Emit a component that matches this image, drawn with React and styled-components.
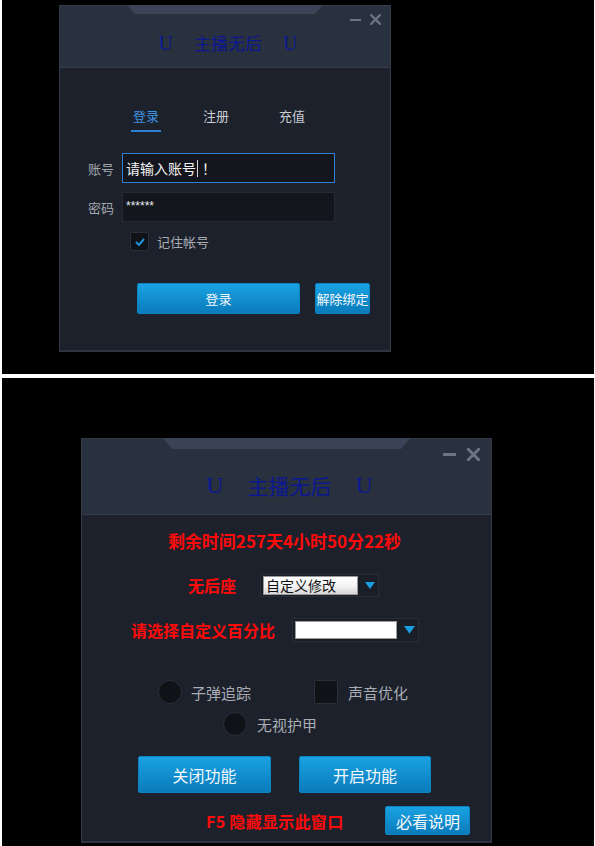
import React from "react";
import styled, { createGlobalStyle } from "styled-components";

const Global = createGlobalStyle`
  html, body { margin: 0; padding: 0; background: #ffffff; }
  body { font-family: "Noto Sans CJK SC", "Noto Sans", sans-serif; }
  * { box-sizing: border-box; }
`;

const Page = styled.div`
  width: 595px;
  display: flex;
  flex-direction: column;
  gap: 4px;
`;

const Stage = styled.div`
  background: #000;
  height: ${(p) => p.$h}px;
  padding-top: ${(p) => p.$top}px;
  padding-left: ${(p) => p.$left}px;
  margin: 0 1px 0 2px;
`;

const Panel = styled.div`
  position: relative;
  width: ${(p) => p.$w}px;
  height: ${(p) => p.$h}px;
  background: #1c212b;
  border: 1px solid #323a47;
  border-bottom: 2px solid #2e3542;
  display: flex;
  flex-direction: column;
`;

const Header = styled.div`
  height: ${(p) => p.$h}px;
  flex: none;
  background: #29313f;
  border-bottom: 1px solid #343d4b;
  display: flex;
  flex-direction: column;
  align-items: center;
`;

const Notch = styled.div`
  width: ${(p) => p.$w}px;
  height: ${(p) => p.$h}px;
  background: #3a4456;
  clip-path: polygon(0 0, 100% 0, calc(100% - ${(p) => p.$s}px) 100%, ${(p) => p.$s}px 100%);
  margin-top: -1px;
`;

const Title = styled.div`
  display: flex;
  align-items: center;
  gap: ${(p) => p.$gap}px;
  margin-top: ${(p) => p.$mt}px;
  font-size: ${(p) => p.$fs}px;
  line-height: ${(p) => p.$lh}px;
  color: #0b1890;
  padding-left: ${(p) => p.$pl || 0}px;
`;

const TitleU = styled.span`
  font-family: "Liberation Serif", serif;
  font-size: ${(p) => p.$fs}px;
`;

const TitleText = styled.span`
  font-family: "Noto Sans CJK SC", sans-serif;
  font-weight: 400;
`;

const Controls = styled.div`
  position: absolute;
  top: ${(p) => p.$top}px;
  right: ${(p) => p.$right}px;
  display: flex;
  align-items: center;
  gap: ${(p) => p.$gap}px;
`;

const Body = styled.div`
  flex: 1;
  display: flex;
  flex-direction: column;
`;

/* ---------- panel 1 ---------- */
const TabBar = styled.div`
  display: flex;
  padding-top: 38px;
  padding-left: 71px;
`;

const Tab = styled.div`
  width: ${(p) => p.$w}px;
  display: flex;
`;

const TabLabel = styled.span`
  font-size: 13px;
  line-height: 20px;
  padding: 0 2px 4px;
  color: ${(p) => (p.$active ? "#3f93e4" : "#c9ccd2")};
  border-bottom: 2px solid ${(p) => (p.$active ? "#2f7fd0" : "transparent")};
`;

const FormRow = styled.div`
  display: flex;
  align-items: center;
  padding-left: 28px;
  margin-top: ${(p) => p.$mt}px;
`;

const Label = styled.div`
  width: 34px;
  font-size: 13px;
  color: #a3a7ae;
`;

const Field = styled.div`
  width: 213px;
  height: 30px;
  background: #13161d;
  border: 1px solid ${(p) => (p.$focus ? "#2f80d2" : "#252a33")};
  display: flex;
  align-items: center;
  padding-left: 3px;
  font-size: 14px;
  color: #f2f3f5;
`;

const Caret = styled.span`
  display: inline-block;
  width: 1px;
  height: 17px;
  background: #d0d3d8;
  margin: 0 4px 0 1px;
`;

const Stars = styled.span`
  font-family: "Liberation Sans", sans-serif;
  font-size: 12px;
  color: #e8eaee;
  margin-top: -2px;
`;

const CheckRow = styled.div`
  display: flex;
  align-items: center;
  gap: 8px;
  padding-left: 70px;
  margin-top: 10px;
`;

const Box = styled.div`
  width: ${(p) => p.$s}px;
  height: ${(p) => p.$s}px;
  background: #0f1217;
  border: 1px solid #2a2f38;
  border-radius: ${(p) => (p.$round ? "50%" : "2px")};
  display: flex;
  align-items: center;
  justify-content: center;
  flex: none;
`;

const OptText = styled.span`
  font-size: ${(p) => p.$fs}px;
  color: #a8acb3;
`;

const ButtonRow = styled.div`
  display: flex;
  align-items: center;
  gap: ${(p) => p.$gap}px;
  padding-left: ${(p) => p.$pl}px;
  margin-top: ${(p) => p.$mt}px;
`;

const BlueButton = styled.div`
  width: ${(p) => p.$w}px;
  height: ${(p) => p.$h}px;
  border-radius: 2px;
  background: linear-gradient(#1aa2e2, #0a7bbb);
  border: 1px solid #0c84c4;
  color: #f4f8fc;
  font-size: ${(p) => p.$fs}px;
  display: flex;
  align-items: center;
  justify-content: center;
  white-space: nowrap;
`;

/* ---------- panel 2 ---------- */
const RedText = styled.div`
  color: #ff0a0a;
  font-weight: 700;
  font-size: ${(p) => p.$fs}px;
  line-height: 24px;
  text-align: ${(p) => p.$align || "left"};
  width: ${(p) => (p.$w ? p.$w + "px" : "auto")};
  letter-spacing: ${(p) => p.$ls || 0}px;
  white-space: nowrap;
`;

const TimeLine = styled(RedText)`
  margin-top: 14px;
  padding-right: 4px;
`;

const SelectRow = styled.div`
  display: flex;
  align-items: center;
  padding-left: ${(p) => p.$pl}px;
  margin-top: ${(p) => p.$mt}px;
`;

const SelectFrame = styled.div`
  width: ${(p) => p.$w}px;
  height: ${(p) => p.$h}px;
  background: #191e27;
  border: 1px solid #282e38;
  display: flex;
  align-items: center;
  padding-left: 2px;
  gap: 7px;
`;

const SelectField = styled.div`
  width: ${(p) => p.$w}px;
  height: ${(p) => p.$h}px;
  background: ${(p) =>
    p.$plain ? "#ffffff" : "linear-gradient(#ffffff, #f3f3f3 55%, #d6d6d6)"};
  border: 1px solid #9a9a9a;
  color: #111;
  font-size: 14px;
  line-height: ${(p) => p.$h - 2}px;
  padding-left: 2px;
  white-space: nowrap;
  overflow: hidden;
`;

const OptRow = styled.div`
  display: flex;
  align-items: center;
  padding-left: ${(p) => p.$pl}px;
  margin-top: ${(p) => p.$mt}px;
`;

const Opt = styled.div`
  display: flex;
  align-items: center;
  gap: ${(p) => p.$gap}px;
  width: ${(p) => (p.$w ? p.$w + "px" : "auto")};
`;

const Minus = ({ w, t }) => (
  <svg width={w} height={t + 2} viewBox={`0 0 ${w} ${t + 2}`}>
    <rect x="0" y="1" width={w} height={t} fill="#6d7583" />
  </svg>
);

const Cross = ({ s, t }) => (
  <svg width={s} height={s} viewBox="0 0 10 10">
    <path d="M1 1 L9 9 M9 1 L1 9" stroke="#6d7583" strokeWidth={t} strokeLinecap="square" />
  </svg>
);

const Arrow = ({ w }) => (
  <svg width={w} height={w * 0.7} viewBox="0 0 10 7">
    <polygon points="0,0 10,0 5,7" fill="#1a9ce0" />
  </svg>
);

const Check = () => (
  <svg width="10" height="8" viewBox="0 0 10 8">
    <polyline points="1,4 4,7 9,1" fill="none" stroke="#1f92da" strokeWidth="2" />
  </svg>
);

export default function App() {
  return (
    <>
      <Global />
      <Page>
        <Stage $h={374} $top={5} $left={57}>
          <Panel $w={332} $h={347}>
            <Header $h={62}>
              <Notch $w={196} $h={9} $s={8} />
              <Title $gap={21} $mt={17} $fs={17} $lh={24} $pl={6}>
                <TitleU $fs={20}>U</TitleU>
                <TitleText>主播无后</TitleText>
                <TitleU $fs={20}>U</TitleU>
              </Title>
            </Header>
            <Controls $top={8} $right={9} $gap={9}>
              <Minus w={11} t={2} />
              <Cross s={11} t={2} />
            </Controls>
            <Body>
              <TabBar>
                <Tab $w={70}>
                  <TabLabel $active>登录</TabLabel>
                </Tab>
                <Tab $w={76}>
                  <TabLabel>注册</TabLabel>
                </Tab>
                <Tab $w={40}>
                  <TabLabel>充值</TabLabel>
                </Tab>
              </TabBar>
              <FormRow $mt={21}>
                <Label>账号</Label>
                <Field $focus>
                  请输入账号<Caret />！
                </Field>
              </FormRow>
              <FormRow $mt={9}>
                <Label>密码</Label>
                <Field>
                  <Stars>******</Stars>
                </Field>
              </FormRow>
              <CheckRow>
                <Box $s={19}>
                  <Check />
                </Box>
                <OptText $fs={13}>记住帐号</OptText>
              </CheckRow>
              <ButtonRow $pl={77} $gap={15} $mt={32}>
                <BlueButton $w={163} $h={31} $fs={13}>
                  登录
                </BlueButton>
                <BlueButton $w={55} $h={31} $fs={13}>
                  解除绑定
                </BlueButton>
              </ButtonRow>
            </Body>
          </Panel>
        </Stage>
        <Stage $h={468} $top={60} $left={79}>
          <Panel $w={411} $h={405}>
            <Header $h={76}>
              <Notch $w={247} $h={11} $s={9} />
              <Title $gap={24} $mt={22} $fs={21} $lh={28} $pl={6}>
                <TitleU $fs={24}>U</TitleU>
                <TitleText>主播无后</TitleText>
                <TitleU $fs={24}>U</TitleU>
              </Title>
            </Header>
            <Controls $top={9} $right={11} $gap={11}>
              <Minus w={13} t={3} />
              <Cross s={13} t={2.2} />
            </Controls>
            <Body>
              <TimeLine $fs={17} $align="center">
                剩余时间257天4小时50分22秒
              </TimeLine>
              <SelectRow $pl={106} $mt={20}>
                <RedText $fs={16} $w={72}>
                  无后座
                </RedText>
                <SelectFrame $w={119} $h={23}>
                  <SelectField $w={95} $h={19}>
                    自定义修改
                  </SelectField>
                  <Arrow w={10} />
                </SelectFrame>
              </SelectRow>
              <SelectRow $pl={49} $mt={21}>
                <RedText $fs={16} $w={161}>
                  请选择自定义百分比
                </RedText>
                <SelectFrame $w={127} $h={24}>
                  <SelectField $w={102} $h={18} $plain />
                  <Arrow w={11} />
                </SelectFrame>
              </SelectRow>
              <OptRow $pl={76} $mt={38}>
                <Opt $gap={9} $w={156}>
                  <Box $s={24} $round />
                  <OptText $fs={15}>子弹追踪</OptText>
                </Opt>
                <Opt $gap={10}>
                  <Box $s={24} />
                  <OptText $fs={15}>声音优化</OptText>
                </Opt>
              </OptRow>
              <OptRow $pl={141} $mt={8}>
                <Opt $gap={10}>
                  <Box $s={24} $round />
                  <OptText $fs={15}>无视护甲</OptText>
                </Opt>
              </OptRow>
              <ButtonRow $pl={56} $gap={28} $mt={20}>
                <BlueButton $w={133} $h={37} $fs={16}>
                  关闭功能
                </BlueButton>
                <BlueButton $w={132} $h={37} $fs={16}>
                  开启功能
                </BlueButton>
              </ButtonRow>
              <ButtonRow $pl={124} $gap={42} $mt={13}>
                <RedText $fs={16} $ls={0.3}>
                  F5 隐藏显示此窗口
                </RedText>
                <BlueButton $w={85} $h={29} $fs={16}>
                  必看说明
                </BlueButton>
              </ButtonRow>
            </Body>
          </Panel>
        </Stage>
      </Page>
    </>
  );
}
